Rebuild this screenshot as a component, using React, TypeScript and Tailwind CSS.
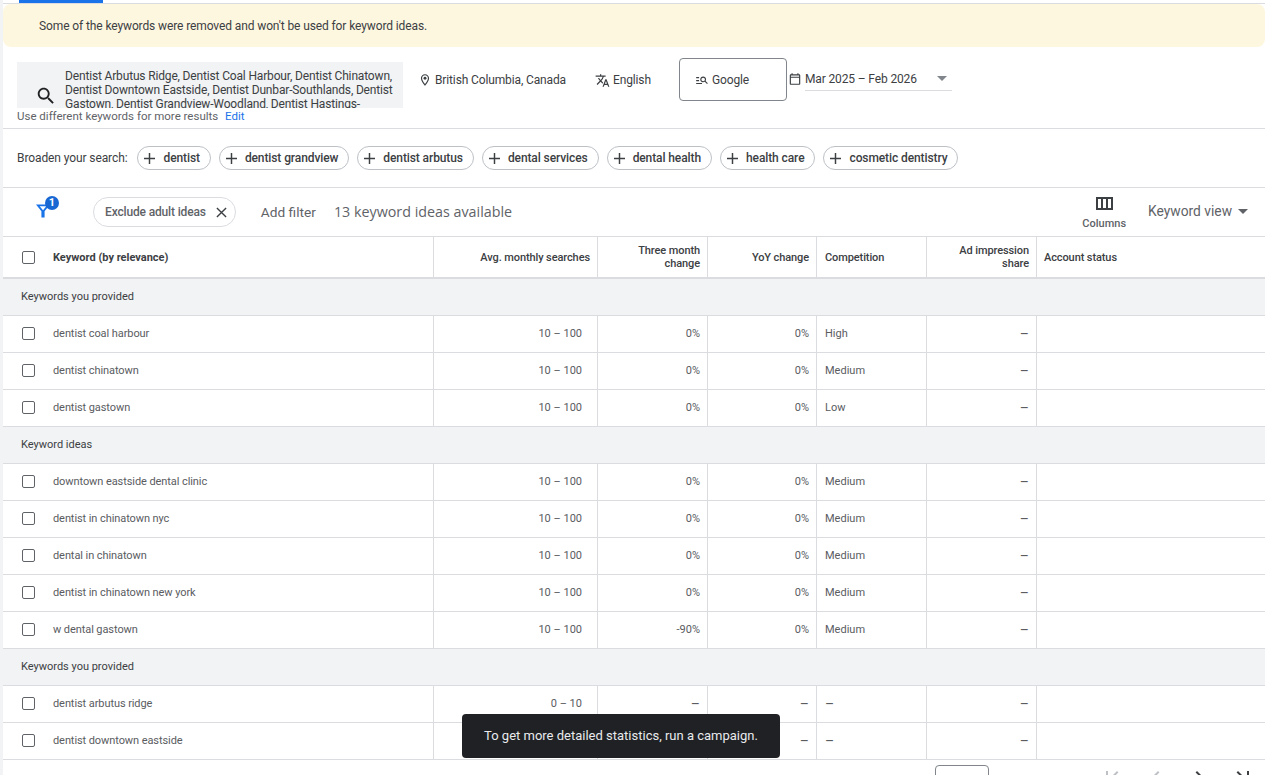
import React from "react";

const font = "font-['Roboto',sans-serif]";

const chips = [
  "dentist",
  "dentist grandview",
  "dentist arbutus",
  "dental services",
  "dental health",
  "health care",
  "cosmetic dentistry",
];

type Row = {
  keyword: string;
  searches: string;
  three: string;
  yoy: string;
  comp: string;
};

type Group = { title: string; rows: Row[] };

const groups: Group[] = [
  {
    title: "Keywords you provided",
    rows: [
      { keyword: "dentist coal harbour", searches: "10 – 100", three: "0%", yoy: "0%", comp: "High" },
      { keyword: "dentist chinatown", searches: "10 – 100", three: "0%", yoy: "0%", comp: "Medium" },
      { keyword: "dentist gastown", searches: "10 – 100", three: "0%", yoy: "0%", comp: "Low" },
    ],
  },
  {
    title: "Keyword ideas",
    rows: [
      { keyword: "downtown eastside dental clinic", searches: "10 – 100", three: "0%", yoy: "0%", comp: "Medium" },
      { keyword: "dentist in chinatown nyc", searches: "10 – 100", three: "0%", yoy: "0%", comp: "Medium" },
      { keyword: "dental in chinatown", searches: "10 – 100", three: "0%", yoy: "0%", comp: "Medium" },
      { keyword: "dentist in chinatown new york", searches: "10 – 100", three: "0%", yoy: "0%", comp: "Medium" },
      { keyword: "w dental gastown", searches: "10 – 100", three: "-90%", yoy: "0%", comp: "Medium" },
    ],
  },
  {
    title: "Keywords you provided",
    rows: [
      { keyword: "dentist arbutus ridge", searches: "0 – 10", three: "–", yoy: "–", comp: "–" },
      // the snackbar sits over the searches and three month cells of this row
      { keyword: "dentist downtown eastside", searches: "", three: "", yoy: "–", comp: "–" },
    ],
  },
];

const gridCols = "grid grid-cols-[431px_164px_110px_109px_110px_110px_1fr]";

const Icon = ({ d, className }: { d: string; className: string }) => (
  <svg viewBox="0 0 24 24" fill="currentColor" className={className}>
    <path d={d} />
  </svg>
);

const Checkbox = () => (
  <span className="block w-[13px] h-[13px] border-[1.5px] border-[#5f6368] rounded-[2px] bg-white" />
);

const Caret = ({ className }: { className: string }) => (
  <span className={`w-0 h-0 border-l-[5px] border-r-[5px] border-t-[5px] border-l-transparent border-r-transparent ${className}`} />
);

// dashes read wider than the digits around them
const Val = ({ v }: { v: string }) => (v === "–" ? <span className="text-[14px] leading-none">–</span> : <>{v}</>);

const KeywordRow = ({ row }: { row: Row }) => (
  <div className={`${gridCols} h-[37px] border-b border-[#dadce0] text-[11px] text-[#5a5c5f]`}>
    <div className="flex items-center pl-[19px] border-r border-[#dadce0]">
      <span className="mb-[2px]">
        <Checkbox />
      </span>
      <span className="ml-[18px] tracking-[-0.08px]">{row.keyword}</span>
    </div>
    <div className="flex items-center justify-end pr-[15px] border-r border-[#dadce0]">{row.searches}</div>
    <div className="flex items-center justify-end pr-[7px] border-r border-[#dadce0]">
      <Val v={row.three} />
    </div>
    <div className="flex items-center justify-end pr-[7px] border-r border-[#dadce0]">
      <Val v={row.yoy} />
    </div>
    <div className="flex items-center pl-2 border-r border-[#dadce0]">
      <Val v={row.comp} />
    </div>
    <div className="flex items-center justify-end pr-[7px] border-r border-[#dadce0]">
      <Val v="–" />
    </div>
    <div />
  </div>
);

export default function App() {
  return (
    <div className={`${font} relative h-[775px] w-full overflow-hidden bg-[#f1f3f4] pl-[3px]`}>
      <div className="h-full bg-white">
        {/* top tab line */}
        <div className="h-[4px] border-b border-[#dadce0] bg-white">
          <div className="ml-4 h-[3px] w-[84px] bg-[#1a73e8]" />
        </div>

        <div className="flex h-[43px] items-center rounded-lg bg-[#fef7e0] pl-9 text-[12px] tracking-[-0.11px] text-[#3c4043]">
          Some of the keywords were removed and won&apos;t be used for keyword ideas.
        </div>

        {/* search settings */}
        <div className="flex h-[82px] border-b border-[#dadce0] pl-[14px] text-[12px] tracking-[-0.13px] text-[#3c4043]">
          <div className="w-[386px] pt-[15px]">
            <div className="flex h-[46px] items-start overflow-hidden bg-[#f1f3f4]">
              <Icon
                className="ml-[18px] mt-[23px] h-[22px] w-[22px] shrink-0 text-[#202124]"
                d="M15.5 14h-.79l-.28-.27C15.41 12.59 16 11.11 16 9.5 16 5.91 13.09 3 9.5 3S3 5.91 3 9.5 5.91 16 9.5 16c1.61 0 3.09-.59 4.23-1.57l.27.28v.79l5 4.99L20.49 19l-4.99-5zm-6 0C7.01 14 5 11.99 5 9.5S7.01 5 9.5 5 14 7.01 14 9.5 11.99 14 9.5 14z"
              />
              <div className="ml-[8px] pt-[7px] leading-[14px] tracking-[-0.16px] text-[#3c4043]">
                Dentist Arbutus Ridge, Dentist Coal Harbour, Dentist Chinatown, Dentist Downtown Eastside, Dentist
                Dunbar-Southlands, Dentist Gastown, Dentist Grandview-Woodland, Dentist Hastings-
              </div>
            </div>
            <div className="mt-[1px] text-[11.5px] leading-[14px] tracking-normal text-[#5f6368]">
              Use different keywords for more results <span className="ml-1 text-[#1a73e8]">Edit</span>
            </div>
          </div>

          <div className="ml-[15px] flex h-[66px] items-center">
            <svg viewBox="0 0 24 24" fill="currentColor" className="h-[14px] w-[14px] text-[#3c4043]">
              <path d="M12 2C8.13 2 5 5.13 5 9c0 5.25 7 13 7 13s7-7.75 7-13c0-3.87-3.13-7-7-7zM7 9c0-2.76 2.24-5 5-5s5 2.24 5 5c0 2.88-2.88 7.19-5 9.88C9.92 16.21 7 11.85 7 9z" />
              <circle cx="12" cy="9" r="2.5" />
            </svg>
            <span className="ml-[3px]">British Columbia, Canada</span>
          </div>

          <div className="ml-[29px] flex h-[66px] items-center">
            <Icon
              className="h-[15px] w-[15px] text-[#3c4043]"
              d="M12.87 15.07l-2.54-2.51.03-.03c1.74-1.94 2.98-4.17 3.71-6.53H17V4h-7V2H8v2H1v1.99h11.17C11.5 7.92 10.44 9.75 9 11.35 8.07 10.32 7.3 9.19 6.69 8h-2c.73 1.63 1.73 3.17 2.98 4.56l-5.09 5.02L4 19l5-5 3.11 3.11.76-2.04zM18.5 10h-2L12 22h2l1.12-3h4.75L21 22h2l-4.5-12zm-2.62 7l1.62-4.33L19.12 17h-3.24z"
            />
            <span className="ml-[3px]">English</span>
          </div>

          <div className="ml-[28px] mt-[11px] flex h-[43px] w-[108px] items-center rounded border border-[#80868b] pl-[15px]">
            <Icon
              className="h-[14px] w-[14px] text-[#3c4043]"
              d="M7 9H2V7h5v2zm0 3H2v2h5v-2zm13.59 7l-3.83-3.83c-.8.52-1.74.83-2.76.83-2.76 0-5-2.24-5-5s2.24-5 5-5 5 2.24 5 5c0 1.02-.31 1.96-.83 2.75L22 17.59 20.59 19zM17 11c0-1.65-1.35-3-3-3s-3 1.35-3 3 1.35 3 3 3 3-1.35 3-3zM2 19h10v-2H2v2z"
            />
            <span className="ml-[3px]">Google</span>
          </div>

          <div className="ml-[1px] mt-[23px] flex h-[21px] items-start">
            <Icon
              className="mt-[2px] h-[14px] w-[14px] text-[#3c4043]"
              d="M19 4h-1V2h-2v2H8V2H6v2H5c-1.11 0-1.99.9-1.99 2L3 20c0 1.1.89 2 2 2h14c1.1 0 2-.9 2-2V6c0-1.1-.9-2-2-2zm0 16H5V10h14v10zm0-12H5V6h14v2z"
            />
            <div className="ml-[3px] flex h-[21px] w-[147px] items-start justify-between border-b border-[#dadce0] pr-[5px]">
              <span className="leading-[18px]">Mar 2025 – Feb 2026</span>
              <Caret className="mt-[6px] border-t-[#80868b]" />
            </div>
          </div>
        </div>

        {/* broaden */}
        <div className="flex h-[59px] items-center border-b border-[#dadce0] pl-[14px] text-[12px] tracking-[-0.1px] text-[#3c4043]">
          <span className="mr-[10px]">Broaden your search:</span>
          <div className="flex gap-2">
            {chips.map((chip) => (
              <span
                key={chip}
                className="flex h-[24px] items-center rounded-full border border-[#bdc1c6] pl-[6px] pr-[10px] font-medium"
              >
                <svg viewBox="0 0 12 12" className="mr-[8px] h-[11px] w-[11px] text-[#3c4043]" fill="currentColor">
                  <path d="M5.2 0h1.6v5.2H12v1.6H6.8V12H5.2V6.8H0V5.2h5.2z" />
                </svg>
                {chip}
              </span>
            ))}
          </div>
        </div>

        {/* filter bar */}
        <div className="flex h-[49px] items-center border-b border-[#dadce0] pr-[17px] text-[#5f6368]">
          <div className="relative ml-[32px] h-[30px] w-[24px]">
            <svg viewBox="0 0 15 14" className="absolute left-[1px] top-[7px] h-[14px] w-[14px] text-[#1a73e8]" fill="currentColor">
              <path d="M0 0h15L9.2 7.2V14H5.8V7.2zM4 1.8l3.5 4.3L11 1.8z" />
            </svg>
            <span className="absolute left-[10px] top-[-1px] flex h-[14px] w-[14px] items-center justify-center rounded-full bg-[#1967d2] text-[11px] font-bold text-white">
              1
            </span>
          </div>
          <span className="ml-[34px] flex h-[30px] items-center rounded-full border border-[#dadce0] pl-[11px] pr-[8px] text-[12px] font-medium tracking-[-0.15px] text-[#5f6368]">
            Exclude adult ideas
            <svg viewBox="0 0 12 12" className="ml-[10px] h-[11px] w-[11px] text-[#3c4043]" fill="none" stroke="currentColor" strokeWidth="1.5">
              <path d="M1 1l10 10M11 1L1 11" />
            </svg>
          </span>
          <span className="ml-[25px] text-[13.7px]">Add filter</span>
          <span className="ml-[18px] font-['Open_Sans',sans-serif] text-[14.3px] font-medium text-[#5f6368]">
            13 keyword ideas available
          </span>
          <div className="ml-auto -mt-[1px] flex flex-col items-center">
            <Icon
              className="h-6 w-6 text-[#3c4043]"
              d="M4 5v13h17V5H4zm10 2v9h-3V7h3zM6 7h3v9H6V7zm13 9h-3V7h3v9z"
            />
            <span className="mt-[1px] text-[11px] font-medium leading-[14px]">Columns</span>
          </div>
          <span className="ml-[22px] -mt-[2px] text-[13.8px]">Keyword view</span>
          <Caret className="ml-[6px] -mt-[1px] border-t-[#5f6368]" />
        </div>

        {/* table */}
        <div className={`${gridCols} h-[42px] border-b-2 border-[#dadce0] text-[11px] font-medium tracking-[-0.1px] text-[#3c4043]`}>
          <div className="flex items-center border-r border-[#dadce0] pl-[19px]">
            <Checkbox />
            <span className="ml-[18px] pt-[2px] font-bold tracking-normal">Keyword (by relevance)</span>
          </div>
          <div className="flex items-center justify-end border-r border-[#dadce0] pr-[7px] pt-[2px]">Avg. monthly searches</div>
          <div className="flex items-center justify-end border-r border-[#dadce0] pr-[7px] text-right leading-[13px]">
            Three month
            <br />
            change
          </div>
          <div className="flex items-center justify-end border-r border-[#dadce0] pr-[7px] pt-[2px]">YoY change</div>
          <div className="flex items-center border-r border-[#dadce0] pl-2 pt-[2px]">Competition</div>
          <div className="flex items-center justify-end border-r border-[#dadce0] pr-[7px] text-right leading-[13px]">
            Ad impression
            <br />
            share
          </div>
          <div className="flex items-center pl-[7px] pt-[2px]">Account status</div>
        </div>

        {groups.map((group, i) => (
          <div key={i}>
            <div className="flex h-[37px] items-center border-b border-[#dadce0] bg-[#f1f3f4] pl-[18px] text-[11px] text-[#3c4043]">
              {group.title}
            </div>
            {group.rows.map((row) => (
              <KeywordRow key={row.keyword} row={row} />
            ))}
          </div>
        ))}

        {/* pagination, cut off by the window */}
        <div className="flex h-[40px] pt-[5px] text-[#5f6368]">
          <div className="ml-[932px] h-[32px] w-[54px] rounded border border-[#80868b]" />
          <Icon className="ml-[111px] h-6 w-6 text-[#bdc1c6]" d="M18.41 16.59L13.82 12l4.59-4.59L17 6l-6 6 6 6zM6 6h2v12H6z" />
          <Icon className="ml-[20px] h-6 w-6 text-[#bdc1c6]" d="M15.41 7.41L14 6l-6 6 6 6 1.41-1.41L10.83 12z" />
          <Icon className="ml-[19px] h-6 w-6 text-[#3c4043]" d="M10 6L8.59 7.41 13.17 12l-4.58 4.59L10 18l6-6z" />
          <Icon className="ml-[20px] h-6 w-6 text-[#3c4043]" d="M5.59 7.41L10.18 12l-4.59 4.59L7 18l6-6-6-6zM16 6h2v12h-2z" />
        </div>
      </div>

      {/* snackbar */}
      <div className="absolute left-[462px] top-[714px] flex h-[44px] w-[318px] items-center justify-center rounded bg-[#202124] text-[13px] text-[#e8eaed]">
        To get more detailed statistics, run a campaign.
      </div>
    </div>
  );
}
